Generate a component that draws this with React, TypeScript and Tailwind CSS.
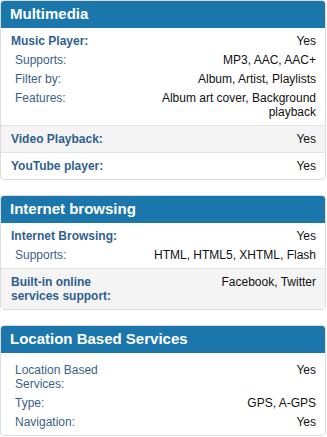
type Row = { label: string; value: string; sub?: boolean };
type Group = { rows: Row[]; shaded?: boolean };
type Section = { title: string; groups: Group[]; padTop?: string };

const sections: Section[] = [
  {
    title: "Multimedia",
    groups: [
      {
        rows: [
          { label: "Music Player:", value: "Yes" },
          { label: "Supports:", value: "MP3, AAC, AAC+", sub: true },
          { label: "Filter by:", value: "Album, Artist, Playlists", sub: true },
          { label: "Features:", value: "Album art cover, Background playback", sub: true },
        ],
      },
      { rows: [{ label: "Video Playback:", value: "Yes" }], shaded: true },
      { rows: [{ label: "YouTube player:", value: "Yes" }] },
    ],
  },
  {
    title: "Internet browsing",
    groups: [
      {
        rows: [
          { label: "Internet Browsing:", value: "Yes" },
          { label: "Supports:", value: "HTML, HTML5, XHTML, Flash", sub: true },
        ],
      },
      { rows: [{ label: "Built-in online services support:", value: "Facebook, Twitter" }], shaded: true },
    ],
  },
  {
    title: "Location Based Services",
    padTop: "pt-[10px]",
    groups: [
      {
        rows: [
          { label: "Location Based Services:", value: "Yes", sub: true },
          { label: "Type:", value: "GPS, A-GPS", sub: true },
          { label: "Navigation:", value: "Yes", sub: true },
        ],
      },
    ],
  },
];

function SpecRow({ row }: { row: Row }) {
  return (
    <div className="flex justify-between leading-[14px]">
      <div
        className={
          row.sub
            ? "w-[40%] pl-[4px] text-[#3b5f88]"
            : "w-[40%] font-bold text-[#2f5f8f]"
        }
      >
        {row.label}
      </div>
      <div className="w-[60%] text-right text-[#111]">{row.value}</div>
    </div>
  );
}

function SpecCard({ section }: { section: Section }) {
  return (
    <div className="mr-[1px] rounded-[4px] border border-[#dcdcdc] bg-white">
      <div className="flex h-[27px] items-center rounded-t-[3px] bg-[#1b77ab] px-[9px] text-[15px] font-bold text-white">
        {section.title}
      </div>
      {section.groups.map((g, i) => (
        <div
          key={i}
          className={
            (i > 0 ? "border-t border-[#e4e4e4] " : "") +
            (g.shaded ? "bg-[#f4f4f4] " : "") +
            (i === 0 && section.padTop ? section.padTop : "pt-[6px]") +
            " flex flex-col gap-[5px] pl-[10px] pr-[9px] pb-[6px]"
          }
        >
          {g.rows.map((r) => (
            <SpecRow key={r.label} row={r} />
          ))}
        </div>
      ))}
    </div>
  );
}

export default function App() {
  return (
    <div className="flex w-[327px] flex-col gap-[15px] bg-white text-[12px] [font-family:'Liberation_Sans',Arial,sans-serif]">
      {sections.map((s) => (
        <SpecCard key={s.title} section={s} />
      ))}
    </div>
  );
}
